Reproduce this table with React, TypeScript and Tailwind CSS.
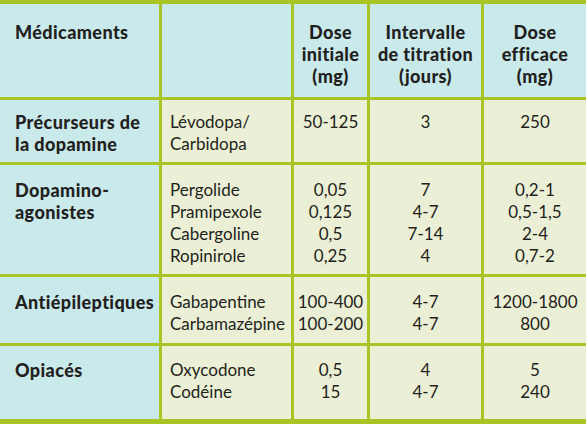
import React from "react";

const font = { fontFamily: "Lato, 'Open Sans', sans-serif" };

type Row = {
  group: string[];
  drugs: string[];
  dose: string[];
  interval: string[];
  eff: string[];
  pt: string;
};

const rows: Row[] = [
  { group: ["Précurseurs de", "la dopamine"], drugs: ["Lévodopa/", "Carbidopa"], dose: ["50-125"], interval: ["3"], eff: ["250"], pt: "pt-[11px]" },
  { group: ["Dopamino-", "agonistes"], drugs: ["Pergolide", "Pramipexole", "Cabergoline", "Ropinirole"], dose: ["0,05", "0,125", "0,5", "0,25"], interval: ["7", "4-7", "7-14", "4"], eff: ["0,2-1", "0,5-1,5", "2-4", "0,7-2"], pt: "pt-[14px]" },
  { group: ["Antiépileptiques"], drugs: ["Gabapentine", "Carbamazépine"], dose: ["100-400", "100-200"], interval: ["4-7", "4-7"], eff: ["1200-1800", "800"], pt: "pt-[14px]" },
  { group: ["Opiacés"], drugs: ["Oxycodone", "Codéine"], dose: ["0,5", "15"], interval: ["4", "4-7"], eff: ["5", "240"], pt: "pt-[13px]" },
];

function Lines({ items }: { items: string[] }) {
  return (
    <>
      {items.map((t, i) => (
        <div key={i} className="whitespace-nowrap">{t}</div>
      ))}
    </>
  );
}

const bold = "font-black text-[18px] tracking-[0.4px]";

export default function App() {
  return (
    <div
      className="w-[586px] h-[424px] overflow-hidden bg-[#a8c425] pt-[4px] pb-[5px] grid grid-cols-[159px_129px_73px_111px_1fr] grid-rows-[93px_62px_109px_66px_73px] gap-[3px] text-[17px] leading-[22px] text-[#231f20]"
      style={font}
    >
      <div className={`bg-[#c9e9eb] pl-[15px] pt-[17px] ${bold}`}>Médicaments</div>
      <div className="bg-[#c9e9eb]" />
      <div className={`bg-[#c9e9eb] pt-[17px] text-center ${bold}`}>
        <Lines items={["Dose", "initiale", "(mg)"]} />
      </div>
      <div className={`bg-[#c9e9eb] pt-[17px] text-center ${bold}`}>
        <Lines items={["Intervalle", "de titration", "(jours)"]} />
      </div>
      <div className={`bg-[#c9e9eb] pt-[17px] text-center ${bold}`}>
        <Lines items={["Dose", "efficace", "(mg)"]} />
      </div>
      {rows.map((r, i) => (
        <React.Fragment key={i}>
          <div className={`bg-[#c9e9eb] pl-[15px] ${bold} ${r.pt}`}>
            <Lines items={r.group} />
          </div>
          <div className={`bg-[#ebefd5] pl-[8px] ${r.pt}`}>
            <Lines items={r.drugs} />
          </div>
          <div className={`bg-[#ebefd5] text-center ${r.pt}`}>
            <Lines items={r.dose} />
          </div>
          <div className={`bg-[#ebefd5] text-center ${r.pt}`}>
            <Lines items={r.interval} />
          </div>
          <div className={`bg-[#ebefd5] text-center ${r.pt}`}>
            <Lines items={r.eff} />
          </div>
        </React.Fragment>
      ))}
    </div>
  );
}
